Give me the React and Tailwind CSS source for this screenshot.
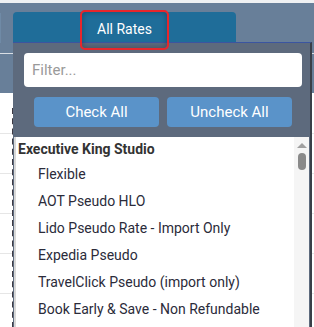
import React from "react";

const items = [
  "Flexible",
  "AOT Pseudo HLO",
  "Lido Pseudo Rate - Import Only",
  "Expedia Pseudo",
  "TravelClick Pseudo (import only)",
  "Book Early & Save - Non Refundable",
];

export default function App() {
  return (
    <div
      className="relative w-[314px] h-[327px] overflow-hidden bg-white"
      style={{ fontFamily: "Roboto, 'Liberation Sans', sans-serif" }}
    >
      {/* background page */}
      <div className="flex flex-col">
        <div className="h-[3px] bg-[#eef0f2]" />
        <div className="h-[50px] bg-[#687f99] flex">
          <div className="mt-[10px] h-[30px] w-[1px] bg-[#6f8aa6]" />
        </div>
        <div className="h-[1px] bg-[#d9dee4]" />
        <div className="h-[39px] bg-[#687f99]" />
        <div className="flex flex-col">
          <div className="h-[41px] border-b border-[#e6e6e6]" />
          <div className="h-[40px] border-b border-[#e6e6e6]" />
          <div className="h-[40px] border-b border-[#e6e6e6]" />
          <div className="h-[40px] border-b border-[#e6e6e6]" />
          <div className="h-[40px] border-b border-[#e6e6e6]" />
        </div>
      </div>
      <div className="absolute left-[12px] top-[108px] h-[220px] w-[2px] border-l-2 border-dashed border-[#3d3a44]" />

      {/* popup */}
      <div className="absolute left-[13px] top-[42px] w-[299px] h-[290px] bg-[#5d6a7d] border-t border-[#3b55a0] border-r-2 border-r-[#3a3f48] flex flex-col">
        <div className="px-[11px] pt-[10px]">
          <input
            placeholder="Filter..."
            className="w-[278px] h-[34px] rounded-[4px] bg-white px-[8px] text-[15px] text-[#333] placeholder:text-[#9a9a9a] outline-none"
          />
        </div>
        <div className="flex gap-[8px] pl-[21px] pt-[10px]">
          <button className="w-[125px] h-[30px] rounded-[4px] bg-[#5a93c9] text-white text-[15px]">
            Check All
          </button>
          <button className="w-[125px] h-[30px] rounded-[4px] bg-[#5a93c9] text-white text-[15px]">
            Uncheck All
          </button>
        </div>
        <div className="mt-[10px] ml-[1px] mr-[1px] flex-1 bg-white border-l-2 border-[#d8d8d8] flex">
          <div className="flex-1 flex flex-col text-[14px] text-[#2b2b3a]">
            <div className="h-[24px] pl-[2px] flex items-center font-bold text-[#333]">
              Executive King Studio
            </div>
            {items.map((t) => (
              <div key={t} className="h-[27px] pl-[22px] flex items-center">
                {t}
              </div>
            ))}
          </div>
          <div className="w-[15px] bg-[#f5f5f5] flex flex-col items-center pt-[6px]">
            <div className="w-0 h-0 border-l-[5px] border-r-[5px] border-b-[5px] border-l-transparent border-r-transparent border-b-[#a0a0a0]" />
            <div className="mt-[5px] w-[8px] h-[17px] rounded-[4px] bg-[#8a8a8a]" />
          </div>
        </div>
      </div>

      {/* tab (over popup) */}
      <div className="absolute z-10 left-[13px] top-[12px] w-[223px] h-[30px] bg-[#1f6d99] rounded-t-[4px] flex justify-center">
        <div className="mt-[-2px] w-[89px] h-[40px] border-2 border-[#e8262b] rounded-[5px] shadow-[inset_0_0_6px_rgba(0,0,0,0.3)] flex items-start justify-center pt-[7px] text-white text-[14px]">
          All Rates
        </div>
      </div>
    </div>
  );
}
